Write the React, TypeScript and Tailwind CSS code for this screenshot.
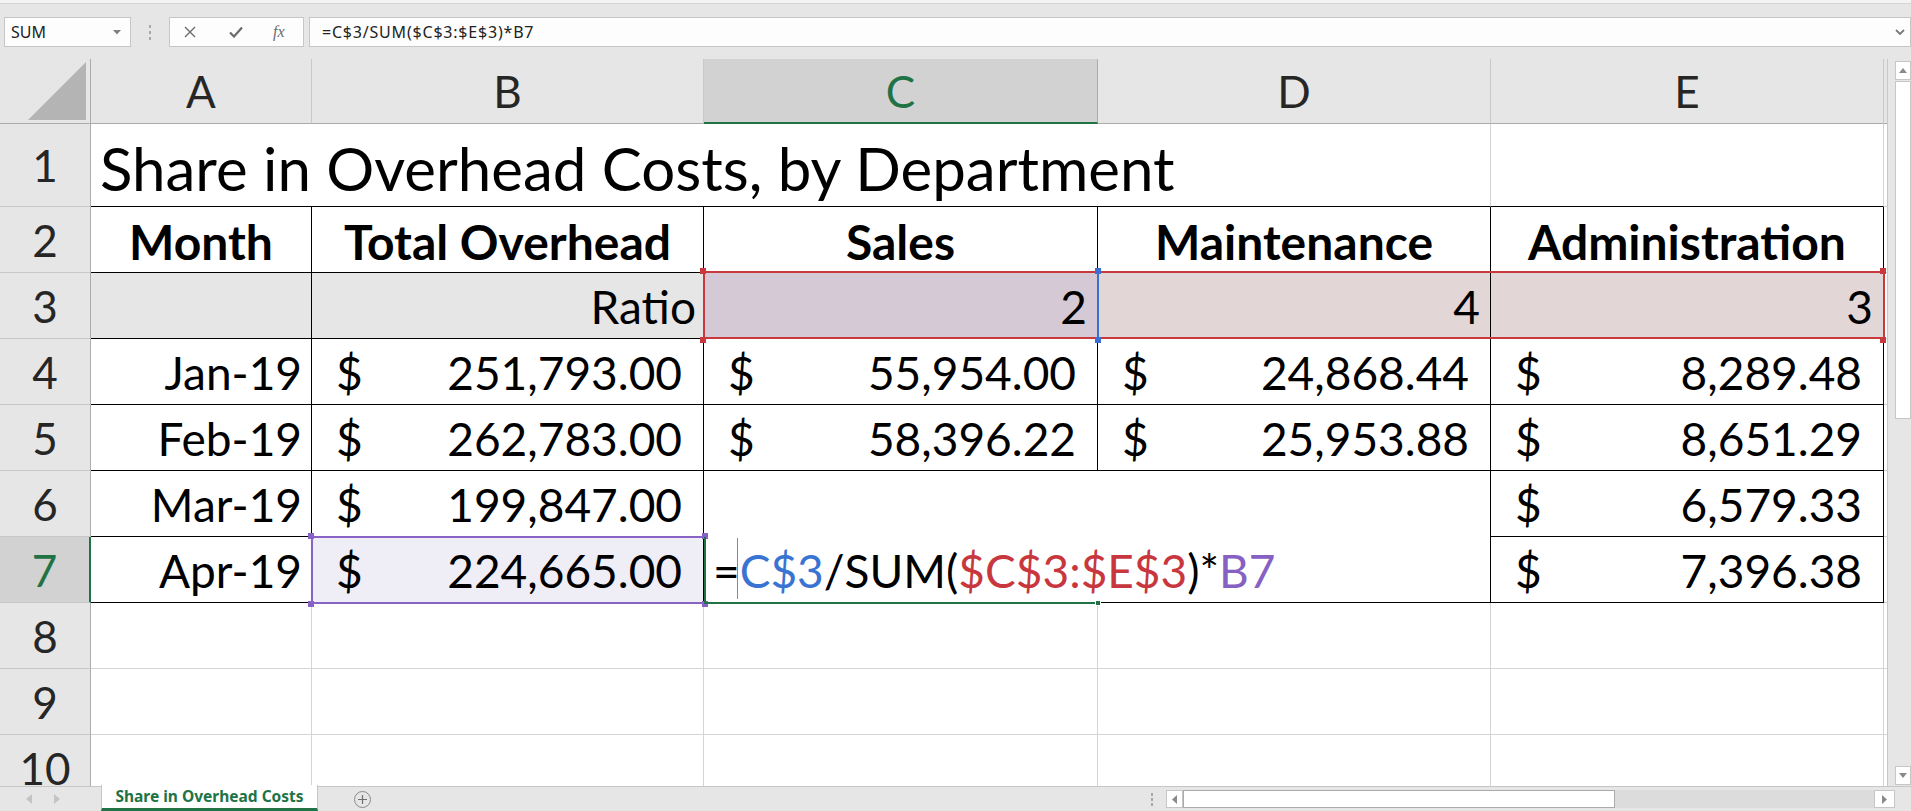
import React from 'react';

const B = 'shrink-0 border-r border-b border-black';
const G = 'shrink-0 border-r border-b border-[#d4d4d4]';
const TXT = 'flex items-end pb-[8px] text-[46px] leading-none';
const HEAD = 'shrink-0 flex items-center justify-center text-[44px] leading-none';

function RowHead({ n, sel }: { n: number; sel?: boolean }) {
  return (
    <div
      className={
        sel
          ? `${HEAD} w-[91px] bg-[#d2d2d2] text-[#217346] border-b border-b-[#c8c8c8] border-r-2 border-r-[#217346]`
          : `${HEAD} w-[91px] bg-[#e6e6e6] text-[#262626] border-b border-b-[#c8c8c8] border-r border-r-[#ababab]`
      }
    >
      {n}
    </div>
  );
}

function ColHead({ w, label, sel }: { w: string; label: string; sel?: boolean }) {
  return (
    <div
      className={
        sel
          ? `${HEAD} ${w} bg-[#d2d2d2] text-[#217346] border-r border-r-[#ababab] border-b-2 border-b-[#217346]`
          : `${HEAD} ${w} text-[#262626] border-r border-r-[#c8c8c8] border-b border-b-[#ababab]`
      }
    >
      {label}
    </div>
  );
}

function Acct({ w, v, fill = '' }: { w: string; v: string; fill?: string }) {
  return (
    <div className={`${B} ${w} ${fill} ${TXT} justify-between pl-[24px] pr-[21px]`}>
      <span>$</span>
      <span>{v}</span>
    </div>
  );
}

function Month({ v }: { v: string }) {
  return <div className={`${B} w-[221px] ${TXT} justify-end pr-[9px]`}>{v}</div>;
}

function Bold({ w, v }: { w: string; v: string }) {
  return (
    <div className={`${B} ${w} flex items-end justify-center pb-[6px] text-[48px] leading-none font-bold`}>
      {v}
    </div>
  );
}

function Filler({ line = 'border-[#d4d4d4]' }: { line?: string }) {
  return <div className={`flex-1 border-b ${line}`} />;
}

function Handle({ cls }: { cls: string }) {
  return <div className={`absolute w-[6px] h-[6px] z-20 ${cls}`} />;
}

function EmptyRow({ n }: { n: number }) {
  return (
    <div className="flex shrink-0 h-[66px] bg-white">
      <RowHead n={n} />
      <div className={`${G} w-[221px]`} />
      <div className={`${G} w-[392px]`} />
      <div className={`${G} w-[394px]`} />
      <div className={`${G} w-[393px]`} />
      <div className={`${G} w-[393px]`} />
      <Filler />
    </div>
  );
}

function FormulaBar() {
  return (
    <div className="h-[55px] shrink-0 flex items-start pt-[13px] pl-[4px] font-['Noto_Sans',sans-serif]">
      <div className="w-[127px] h-[30px] bg-[#fdfdfd] border border-[#c6c6c6] flex items-center justify-between pl-[6px] pr-[9px] text-[16px] text-[#222]">
        <span>SUM</span>
        <svg width="8" height="5" viewBox="0 0 8 5">
          <path d="M0 0h8L4 4.5z" fill="#808080" />
        </svg>
      </div>
      <div className="w-[38px] h-[30px] flex flex-col items-center justify-center gap-[3px]">
        <div className="w-[2px] h-[3px] bg-[#a8a8a8]" />
        <div className="w-[2px] h-[3px] bg-[#a8a8a8]" />
        <div className="w-[2px] h-[3px] bg-[#a8a8a8]" />
      </div>
      <div className="w-[135px] h-[30px] bg-[#fdfdfd] border border-[#c6c6c6] flex items-center pl-[14px]">
        <svg width="12" height="12" viewBox="0 0 12 12">
          <path d="M1 1l10 10M11 1L1 11" stroke="#6b6b6b" strokeWidth="1.4" />
        </svg>
        <svg className="ml-[33px]" width="14" height="12" viewBox="0 0 14 12">
          <path d="M1 6.5l4 4L13 1.5" stroke="#6b6b6b" strokeWidth="2.2" fill="none" />
        </svg>
        <span className="ml-[30px] italic text-[16px] text-[#6b6b6b] font-['Liberation_Serif',serif] leading-none">
          fx
        </span>
      </div>
      <div className="flex-1 h-[30px] ml-[5px] bg-[#fdfdfd] border border-[#c6c6c6] flex items-center justify-between pl-[12px] pr-[5px] text-[16px] tracking-[0.8px] text-[#222]">
        <span>=C$3/SUM($C$3:$E$3)*B7</span>
        <svg width="10" height="7" viewBox="0 0 10 7">
          <path d="M1 1l4 4 4-4" stroke="#7a7a7a" strokeWidth="1.8" fill="none" />
        </svg>
      </div>
    </div>
  );
}

function Sheet() {
  return (
    <div className="w-[1887px] h-[727px] overflow-hidden flex flex-col">
      {/* column headers */}
      <div className="flex shrink-0 h-[65px]">
        <div className="shrink-0 w-[91px] border-r border-b border-[#ababab] flex items-start pt-[3px] pl-[28px]">
          <svg width="59" height="59" viewBox="0 0 59 59">
            <path d="M0 58L58 0V58z" fill="#b4b4b4" />
          </svg>
        </div>
        <ColHead w="w-[221px]" label="A" />
        <ColHead w="w-[392px]" label="B" />
        <ColHead w="w-[394px]" label="C" sel />
        <ColHead w="w-[393px]" label="D" />
        <ColHead w="w-[393px]" label="E" />
        <div className="flex-1 border-b border-[#ababab]" />
      </div>

      {/* row 1 */}
      <div className="flex shrink-0 h-[83px] bg-white">
        <RowHead n={1} />
        <div className="shrink-0 w-[1400px] border-r border-r-[#d4d4d4] border-b border-b-black flex items-end pl-[9px] pb-[8px] text-[60px] leading-none">
          Share in Overhead Costs, by Department
        </div>
        <div className="shrink-0 w-[393px] border-r border-r-[#d4d4d4] border-b border-b-black" />
        <Filler />
      </div>

      {/* row 2 */}
      <div className="flex shrink-0 h-[66px] bg-white">
        <RowHead n={2} />
        <Bold w="w-[221px]" v="Month" />
        <Bold w="w-[392px]" v="Total Overhead" />
        <Bold w="w-[394px]" v="Sales" />
        <Bold w="w-[393px]" v="Maintenance" />
        <Bold w="w-[393px]" v="Administration" />
        <Filler />
      </div>

      {/* row 3 */}
      <div className="flex shrink-0 h-[66px] bg-white">
        <RowHead n={3} />
        <div className={`${B} w-[221px] bg-[#e7e6e6]`} />
        <div className={`${B} w-[392px] bg-[#e7e6e6] ${TXT} justify-end pr-[7px]`}>Ratio</div>
        <div className={`${B} relative w-[394px] bg-[#d4c9d4] ${TXT} justify-end pr-[10px]`}>
          2
          {/* $C$3:$E$3 range */}
          <div className="absolute left-[-1px] top-[-2px] w-[1182px] h-[68px] border-2 border-[#c9383c] z-10" />
          <Handle cls="left-[-4px] top-[-5px] bg-[#c9383c]" />
          <Handle cls="left-[-4px] bottom-[-5px] bg-[#c9383c]" />
          <Handle cls="left-[1176px] top-[-5px] bg-[#c9383c]" />
          <Handle cls="left-[1176px] bottom-[-5px] bg-[#c9383c]" />
          {/* C$3 ref */}
          <div className="absolute right-[-2px] top-[-1px] bottom-[-1px] w-[2px] bg-[#3b6fd1] z-20" />
          <Handle cls="right-[-4px] top-[-5px] bg-[#3b6fd1]" />
          <Handle cls="right-[-4px] bottom-[-5px] bg-[#3b6fd1]" />
        </div>
        <div className={`${B} w-[393px] bg-[#e3d6d7] ${TXT} justify-end pr-[10px]`}>4</div>
        <div className={`${B} w-[393px] bg-[#e3d6d7] ${TXT} justify-end pr-[10px]`}>3</div>
        <Filler />
      </div>

      {/* row 4 */}
      <div className="flex shrink-0 h-[66px] bg-white">
        <RowHead n={4} />
        <Month v="Jan-19" />
        <Acct w="w-[392px]" v="251,793.00" />
        <Acct w="w-[394px]" v="55,954.00" />
        <Acct w="w-[393px]" v="24,868.44" />
        <Acct w="w-[393px]" v="8,289.48" />
        <Filler />
      </div>

      {/* row 5 */}
      <div className="flex shrink-0 h-[66px] bg-white">
        <RowHead n={5} />
        <Month v="Feb-19" />
        <Acct w="w-[392px]" v="262,783.00" />
        <Acct w="w-[394px]" v="58,396.22" />
        <Acct w="w-[393px]" v="25,953.88" />
        <Acct w="w-[393px]" v="8,651.29" />
        <Filler />
      </div>

      {/* row 6 */}
      <div className="flex shrink-0 h-[66px] bg-white">
        <RowHead n={6} />
        <Month v="Mar-19" />
        <Acct w="w-[392px]" v="199,847.00" />
        <div className="shrink-0 w-[787px] border-r border-black" />
        <Acct w="w-[393px]" v="6,579.33" />
        <Filler />
      </div>

      {/* row 7 */}
      <div className="flex shrink-0 h-[66px] bg-white">
        <RowHead n={7} sel />
        <Month v="Apr-19" />
        <div className={`${B} relative w-[392px] bg-[#efedf6] ${TXT} justify-between pl-[24px] pr-[21px]`}>
          <span>$</span>
          <span>224,665.00</span>
          <div className="absolute left-[-1px] top-[-1px] w-[395px] h-[68px] border-2 border-[#8862c4] z-10" />
          <Handle cls="left-[-4px] top-[-4px] bg-[#8862c4]" />
          <Handle cls="left-[-4px] bottom-[-5px] bg-[#8862c4]" />
          <Handle cls="right-[-5px] top-[-4px] bg-[#8862c4]" />
          <Handle cls="right-[-5px] bottom-[-5px] bg-[#8862c4]" />
        </div>
        <div className={`${B} relative w-[787px] ${TXT} pl-[9px]`}>
          <span>
            =<span className="text-[#3a74d2]">C$3</span>/SUM(
            <span className="text-[#c8373d]">$C$3:$E$3</span>)*
            <span className="text-[#8660c2]">B7</span>
          </span>
          <div className="absolute left-[33px] top-[1px] w-px h-[61px] bg-[#8a8a8a]" />
          <div className="absolute left-0 top-0 bottom-[-2px] w-[2px] bg-[#217346] z-20" />
          <div className="absolute left-0 bottom-[-2px] w-[394px] h-[2px] bg-[#217346] z-20" />
          <Handle cls="left-[391px] bottom-[-4px] bg-[#217346] border border-white" />
        </div>
        <Acct w="w-[393px]" v="7,396.38" />
        <Filler />
      </div>

      <EmptyRow n={8} />
      <EmptyRow n={9} />
      <EmptyRow n={10} />
    </div>
  );
}

function VScroll() {
  return (
    <div className="w-[24px] h-[727px] border-l border-[#c8c8c8] flex flex-col items-end pt-[2px] pb-[1px]">
      <div className="w-[16px] h-[19px] bg-white border border-[#c6c6c6] flex items-center justify-center">
        <svg width="8" height="5" viewBox="0 0 8 5">
          <path d="M0 5h8L4 0z" fill="#8a8a8a" />
        </svg>
      </div>
      <div className="w-[16px] h-[338px] mt-[1px] bg-white border border-[#c6c6c6]" />
      <div className="flex-1" />
      <div className="w-[16px] h-[19px] bg-white border border-[#c6c6c6] flex items-center justify-center">
        <svg width="8" height="5" viewBox="0 0 8 5">
          <path d="M0 0h8L4 5z" fill="#8a8a8a" />
        </svg>
      </div>
    </div>
  );
}

function TabBar() {
  return (
    <div className="h-[25px] shrink-0 flex items-center border-t border-[#c6c6c6] font-['Noto_Sans',sans-serif]">
      <div className="w-[101px] flex items-center pl-[26px]">
        <svg width="6" height="10" viewBox="0 0 6 10">
          <path d="M6 0v10L0 5z" fill="#c4c4c4" />
        </svg>
        <svg className="ml-[22px]" width="6" height="10" viewBox="0 0 6 10">
          <path d="M0 0v10L6 5z" fill="#c4c4c4" />
        </svg>
      </div>
      <div className="w-[217px] h-[26px] -mt-[2px] bg-white border-x border-[#c6c6c6] border-b-[3px] border-b-[#217346] flex items-center justify-center text-[15.5px] font-bold text-[#217346]">
        Share in Overhead Costs
      </div>
      <div className="ml-[36px] w-[17px] h-[17px] rounded-full border border-[#8a8a8a] flex items-center justify-center">
        <svg width="9" height="9" viewBox="0 0 9 9">
          <path d="M4.5 0v9M0 4.5h9" stroke="#6f6f6f" strokeWidth="1.2" />
        </svg>
      </div>
      <div className="ml-auto flex items-center h-[18px]">
        <div className="w-[20px] flex flex-col items-center gap-[2px]">
          <div className="w-[2px] h-[3px] bg-[#a8a8a8]" />
          <div className="w-[2px] h-[3px] bg-[#a8a8a8]" />
          <div className="w-[2px] h-[3px] bg-[#a8a8a8]" />
        </div>
        <div className="ml-[4px] w-[17px] h-[18px] bg-white border border-[#c6c6c6] flex items-center justify-center">
          <svg width="5" height="9" viewBox="0 0 5 9">
            <path d="M5 0v9L0 4.5z" fill="#8a8a8a" />
          </svg>
        </div>
        <div className="w-[432px] h-[18px] bg-white border border-[#ababab]" />
        <div className="w-[259px] h-[18px] bg-[#dcdcdc]" />
        <div className="w-[21px] h-[18px] bg-white border border-[#c6c6c6] flex items-center justify-center">
          <svg width="5" height="9" viewBox="0 0 5 9">
            <path d="M0 0v9L5 4.5z" fill="#8a8a8a" />
          </svg>
        </div>
        <div className="w-[16px]" />
      </div>
    </div>
  );
}

export default function App() {
  return (
    <div className="w-[1911px] h-[811px] overflow-hidden bg-[#e6e6e6] flex flex-col font-['Lato',sans-serif] text-black">
      <div className="h-[4px] shrink-0 bg-[#f3f3f3] border-b border-[#d4d4d4]" />
      <FormulaBar />
      <div className="flex h-[727px] shrink-0">
        <Sheet />
        <VScroll />
      </div>
      <TabBar />
    </div>
  );
}
